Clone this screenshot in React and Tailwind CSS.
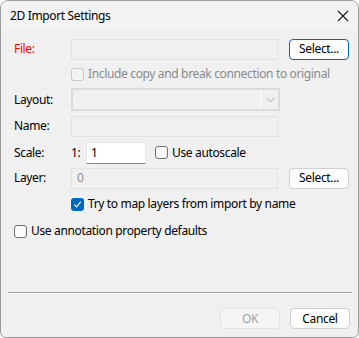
import React from "react";

function Check({ checked, disabled }) {
  if (checked) {
    return (
      <span className="flex h-[13px] w-[13px] shrink-0 items-center justify-center rounded-[3px] bg-[#0067c0]">
        <svg width="9" height="9" viewBox="0 0 9 9" fill="none">
          <path d="M1.5 4.8 L3.5 6.8 L7.5 2.2" stroke="white" strokeWidth="1.2" strokeLinecap="round" strokeLinejoin="round" />
        </svg>
      </span>
    );
  }
  return (
    <span
      className={
        "block h-[13px] w-[13px] shrink-0 rounded-[3px] border " +
        (disabled ? "border-[#c8c8c8] bg-[#f3f3f3]" : "border-[#6e6e6e] bg-[#fbfbfb]")
      }
    />
  );
}

function Btn({ children, focus, disabled }) {
  return (
    <div
      className={
        "flex h-[21px] w-[60px] items-center justify-center rounded-[4px] text-[12px] " +
        (focus
          ? "border border-[#0067c0] bg-[#fdfdfd] text-black"
          : disabled
          ? "border border-[#e3e3e3] bg-[#f5f5f5] text-[#a2a2a2]"
          : "border border-[#d0d0d0] bg-[#fdfdfd] text-black")
      }
    >
      {children}
    </div>
  );
}

function Field({ className = "", children }) {
  return (
    <div className={"flex h-[21px] items-center border border-[#e2e2e2] bg-[#f0f0f0] pl-[5px] text-[12px] text-[#8d8d8d] " + className}>
      {children}
    </div>
  );
}

export default function App() {
  return (
    <div
      className="flex h-[338px] w-[359px] flex-col overflow-hidden rounded-t-[8px] rounded-b-[6px] border border-[#9c9c9c] bg-[#f0f0f0] text-[12px] tracking-[-0.35px] text-black"
      style={{ fontFamily: '"Segoe UI", "Noto Sans", sans-serif' }}
    >
      {/* title bar */}
      <div className="flex h-[29px] shrink-0 items-center justify-between bg-[#f3f3f3] pl-[9px] pr-[9px]">
        <span className="text-[12px]">2D Import Settings</span>
        <svg width="12" height="12" viewBox="0 0 12 12">
          <path d="M1 1 L11 11 M11 1 L1 11" stroke="#1a1a1a" strokeWidth="1.1" />
        </svg>
      </div>

      <div className="flex flex-1 flex-col pl-[13px] pr-[8px]">
        {/* File */}
        <div className="mt-[8px] flex h-[22px] items-center">
          <span className="w-[57px] text-[#ff0000]">File:</span>
          <Field className="w-[207px]" />
          <div className="ml-[11px]">
            <Btn focus>Select...</Btn>
          </div>
        </div>

        {/* include copy */}
        <div className="mt-[7px] flex h-[14px] items-center pl-[57px]">
          <Check disabled />
          <span className="ml-[4px] text-[#8a8a8a]">Include copy and break connection to original</span>
        </div>

        {/* Layout */}
        <div className="mt-[7px] flex h-[23px] items-center">
          <span className="w-[57px]">Layout:</span>
          <div className="flex h-[23px] w-[209px] border-2 border-[#dadada] bg-[#f0f0f0]">
            <div className="flex-1 border-r-2 border-[#f7f7f7]" />
            <div className="flex w-[16px] items-center justify-center">
              <svg width="9" height="6" viewBox="0 0 9 6">
                <path d="M0.5 0.8 L4.5 4.8 L8.5 0.8" stroke="#a8a8a8" strokeWidth="1" fill="none" />
              </svg>
            </div>
          </div>
        </div>

        {/* Name */}
        <div className="mt-[4px] flex h-[22px] items-center">
          <span className="w-[57px]">Name:</span>
          <Field className="w-[207px]" />
        </div>

        {/* Scale */}
        <div className="mt-[4px] flex h-[23px] items-center">
          <span className="w-[57px]">Scale:</span>
          <span className="w-[15px]">1:</span>
          <div className="flex h-[22px] w-[60px] items-center border border-[#e5e5e5] border-b-[#8a8a8a] bg-white pl-[4px]">
            1
          </div>
          <div className="ml-[9px] flex items-center">
            <Check />
            <span className="ml-[4px]">Use autoscale</span>
          </div>
        </div>

        {/* Layer */}
        <div className="mt-[3px] flex h-[22px] items-center">
          <span className="w-[57px]">Layer:</span>
          <Field className="w-[207px]">0</Field>
          <div className="ml-[11px]">
            <Btn>Select...</Btn>
          </div>
        </div>

        {/* try to map */}
        <div className="mt-[8px] flex h-[14px] items-center pl-[57px]">
          <Check checked />
          <span className="ml-[4px]">Try to map layers from import by name</span>
        </div>

        {/* annotation */}
        <div className="mt-[13px] flex h-[14px] items-center">
          <Check />
          <span className="ml-[4px]">Use annotation property defaults</span>
        </div>

        <div className="flex-1" />

        {/* separator */}
        <div className="-ml-[6px] h-[2px] w-[344px] border-t border-[#a0a0a0] border-b border-b-[#fcfcfc]" />

        {/* buttons */}
        <div className="mb-[8px] mt-[14px] flex items-center justify-end gap-[10px]">
          <Btn disabled>OK</Btn>
          <Btn>Cancel</Btn>
        </div>
      </div>
    </div>
  );
}
